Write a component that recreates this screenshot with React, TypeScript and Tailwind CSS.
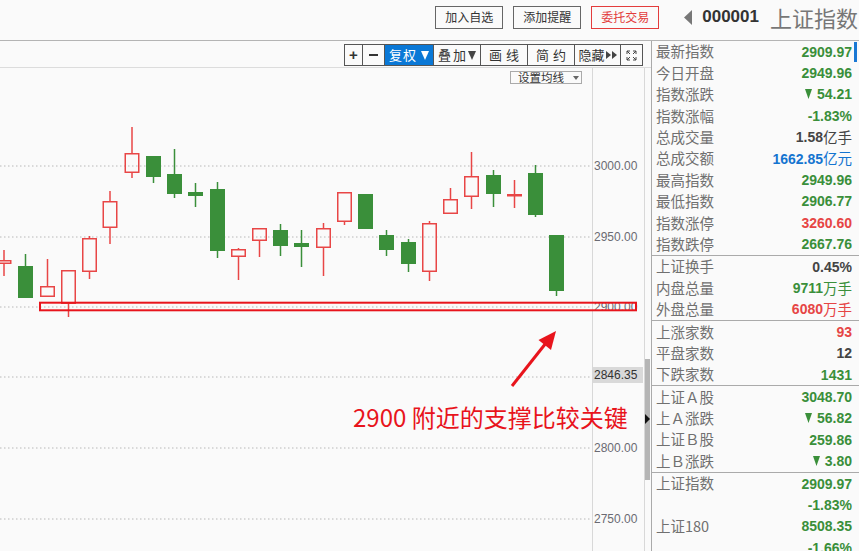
import React from 'react'

const RED = '#e84646'
const GREEN = '#3a8f3a'

// cx, bodyTop, bodyBottom, wickTop, wickBottom, colour (page coords)
type Candle = [number, number, number, number, number, 'r' | 'g' | 'x']

const candles: Candle[] = [
	[4, 260, 264, 250, 276, 'r'],
	[25.5, 266, 298, 254, 298, 'g'],
	[47.5, 286, 297, 259, 297, 'r'],
	[68.5, 270, 304, 270, 317, 'r'],
	[89.5, 238, 272, 236, 279, 'r'],
	[110, 201, 228, 191, 244, 'r'],
	[132, 153, 173, 127, 178, 'r'],
	[153.5, 156, 177, 156, 183, 'g'],
	[174.5, 174, 194, 149, 198, 'g'],
	[195.5, 192, 196, 183, 207, 'g'],
	[217.5, 189, 251, 182, 258, 'g'],
	[238.5, 249, 257, 248, 280, 'r'],
	[259.5, 228, 241, 228, 257, 'r'],
	[280.5, 230, 246, 224, 256, 'g'],
	[301.5, 243, 247, 230, 267, 'g'],
	[323.5, 228, 248, 223, 276, 'r'],
	[344.5, 192, 222, 192, 225, 'r'],
	[365.5, 194, 229, 194, 229, 'g'],
	[386.5, 235, 250, 230, 256, 'g'],
	[408.5, 242, 264, 239, 272, 'g'],
	[429.5, 223, 272, 221, 281, 'r'],
	[450.5, 199, 214, 188, 214, 'r'],
	[471.5, 176, 197, 152, 209, 'r'],
	[493.5, 175, 194, 170, 207, 'g'],
	[514.5, 194, 196.5, 180, 208, 'x'],
	[535.5, 173, 215, 165, 217, 'g'],
	[556.5, 235, 291, 235, 296, 'g'],
]

const grid = [166, 237, 307, 377, 448, 519]

const axis = [
	{ v: '3000.00', top: 'top-[91px]' },
	{ v: '2950.00', top: 'top-[162px]' },
	{ v: '2900.00', top: 'top-[232px]' },
	{ v: '2850.00', top: 'top-[302px]' },
	{ v: '2800.00', top: 'top-[373px]' },
	{ v: '2750.00', top: 'top-[444px]' },
]

const tone = {
	g: 'text-[#3a8f3a]',
	r: 'text-[#e64545]',
	d: 'text-[#444]',
	b: 'text-[#1474d0]',
}

type Row = {
	label: string
	value: string
	t: keyof typeof tone
	down?: boolean
	unit?: string
}

const groups: Row[][] = [
	[
		{ label: '最新指数', value: '2909.97', t: 'g' },
		{ label: '今日开盘', value: '2949.96', t: 'g' },
		{ label: '指数涨跌', value: '54.21', t: 'g', down: true },
		{ label: '指数涨幅', value: '-1.83%', t: 'g' },
		{ label: '总成交量', value: '1.58', t: 'd', unit: '亿手' },
		{ label: '总成交额', value: '1662.85', t: 'b', unit: '亿元' },
		{ label: '最高指数', value: '2949.96', t: 'g' },
		{ label: '最低指数', value: '2906.77', t: 'g' },
		{ label: '指数涨停', value: '3260.60', t: 'r' },
		{ label: '指数跌停', value: '2667.76', t: 'g' },
	],
	[
		{ label: '上证换手', value: '0.45%', t: 'd' },
		{ label: '内盘总量', value: '9711', t: 'g', unit: '万手' },
		{ label: '外盘总量', value: '6080', t: 'r', unit: '万手' },
	],
	[
		{ label: '上涨家数', value: '93', t: 'r' },
		{ label: '平盘家数', value: '12', t: 'd' },
		{ label: '下跌家数', value: '1431', t: 'g' },
	],
	[
		{ label: '上证Ａ股', value: '3048.70', t: 'g' },
		{ label: '上Ａ涨跌', value: '56.82', t: 'g', down: true },
		{ label: '上证Ｂ股', value: '259.86', t: 'g' },
		{ label: '上Ｂ涨跌', value: '3.80', t: 'g', down: true },
	],
	[
		{ label: '上证指数', value: '2909.97', t: 'g' },
		{ label: '', value: '-1.83%', t: 'g' },
		{ label: '上证180', value: '8508.35', t: 'g' },
		{ label: '', value: '-1.66%', t: 'g' },
	],
]

const Down = ({ fill }: { fill: string }) => (
	<svg width="7" height="10" viewBox="0 0 7 10" className="mr-[5px]">
		<polygon points="0,0 7,0 3.5,10" fill={fill} />
	</svg>
)

const TopBtn = ({ children, red }: { children: React.ReactNode; red?: boolean }) => (
	<div
		className={`h-[23px] w-[68px] flex items-center justify-center text-[12px] border ${
			red ? 'border-[#e33c3c] text-[#e33c3c]' : 'border-[#666] text-[#333]'
		}`}
	>
		{children}
	</div>
)

const Tool = ({
	w,
	children,
	active,
	last,
}: {
	w: string
	children: React.ReactNode
	active?: boolean
	last?: boolean
}) => (
	<div
		className={`${w} h-full flex items-center justify-center ${last ? '' : 'border-r border-[#555]'} ${
			active ? 'bg-[#0a78d6] text-white' : ''
		}`}
	>
		{children}
	</div>
)

function Candles() {
	return (
		<svg width="592" height="483" viewBox="0 68 592 483" className="block">
			{grid.map((y) => (
				<line key={y} x1="0" x2="592" y1={y} y2={y} stroke="#b8b8b8" strokeWidth="1" strokeDasharray="1.5 2.5" />
			))}
			{candles.map(([cx, bt, bb, wt, wb, c], i) => {
				if (c === 'g')
					return (
						<g key={i}>
							<line x1={cx} x2={cx} y1={wt} y2={wb} stroke={GREEN} strokeWidth="1.5" />
							<rect x={cx - 7.5} y={bt} width="15" height={bb - bt} fill={GREEN} />
						</g>
					)
				if (c === 'x')
					return (
						<g key={i}>
							<line x1={cx} x2={cx} y1={wt} y2={wb} stroke={RED} strokeWidth="1.5" />
							<rect x={cx - 7.5} y={bt} width="15" height={bb - bt} fill={RED} />
						</g>
					)
				return (
					<g key={i}>
						{wt < bt && <line x1={cx} x2={cx} y1={wt} y2={bt} stroke={RED} strokeWidth="1.5" />}
						{wb > bb && <line x1={cx} x2={cx} y1={bb} y2={wb} stroke={RED} strokeWidth="1.5" />}
						<rect x={cx - 6.75} y={bt + 0.75} width="13.5" height={bb - bt - 1.5} fill="none" stroke={RED} strokeWidth="1.5" />
					</g>
				)
			})}
		</svg>
	)
}

export default function App() {
	return (
		<div className="relative w-[859px] h-[551px] overflow-hidden bg-[#fafafa] flex flex-col font-['Noto_Sans_CJK_SC',sans-serif]">
			{/* header */}
			<header className="h-[41px] shrink-0 border-b border-[#b4b4b4]">
				<div className="h-[34px] flex items-center justify-end pr-[1px]">
					<div className="flex gap-[10px]">
						<TopBtn>加入自选</TopBtn>
						<TopBtn>添加提醒</TopBtn>
						<TopBtn red>委托交易</TopBtn>
					</div>
					<svg width="8" height="15" viewBox="0 0 8 15" className="ml-[25px]">
						<polygon points="8,0 8,15 0,7.5" fill="#777" />
					</svg>
					<span className="ml-[10px] text-[17px] font-bold text-[#333] font-['Liberation_Sans',sans-serif]">000001</span>
					<span className="ml-[11px] text-[22px] text-[#777] whitespace-nowrap">上证指数</span>
				</div>
			</header>

			<div className="flex flex-1 min-h-0">
				{/* chart column */}
				<div className="w-[651px] flex flex-col">
					<div className="h-[27px] shrink-0 border-b border-[#dcdcdc] flex justify-end pr-[8px] pt-[3px]">
						<div className="h-[22px] flex border border-[#555] text-[13px] text-[#333]">
							<Tool w="w-[18px]">
								<span className="font-bold text-[15px] font-['Liberation_Sans',sans-serif]">+</span>
							</Tool>
							<Tool w="w-[22px]">
								<span className="block w-[9px] h-[2px] bg-[#333]" />
							</Tool>
							<Tool w="w-[49px]" active>
								<span className="tracking-[1px]">复权</span>
								<svg width="8" height="9" viewBox="0 0 8 9" className="ml-[4px]">
									<polygon points="0,0 8,0 4,9" fill="#fff" />
								</svg>
							</Tool>
							<Tool w="w-[47px]">
								<span className="tracking-[2px]">叠加</span>
								<svg width="8" height="9" viewBox="0 0 8 9">
									<polygon points="0,0 8,0 4,9" fill="#444" />
								</svg>
							</Tool>
							<Tool w="w-[47px]">
								<span className="tracking-[4px] pl-[4px]">画线</span>
							</Tool>
							<Tool w="w-[47px]">
								<span className="tracking-[4px] pl-[4px]">简约</span>
							</Tool>
							<Tool w="w-[46px]">
								<span>隐藏</span>
								<svg width="11" height="8" viewBox="0 0 11 8" className="ml-[1px]">
									<polygon points="0,0 5,4 0,8" fill="#444" />
									<polygon points="6,0 11,4 6,8" fill="#444" />
								</svg>
							</Tool>
							<Tool w="w-[21px]" last>
								<svg width="11" height="11" viewBox="0 0 11 11" fill="none" stroke="#444" strokeWidth="1">
									<path d="M1 4V1h3M1 1l3 3" />
									<path d="M10 4V1H7M10 1L7 4" />
									<path d="M1 7v3h3M1 10l3-3" />
									<path d="M10 7v3H7M10 10L7 7" />
								</svg>
							</Tool>
						</div>
					</div>

					<div className="flex flex-1 min-h-0">
						<div className="w-[592px] relative">
							<Candles />
							<div className="absolute top-[3px] right-[10px] h-[13px] w-[72px] border border-[#aaa] flex items-center pl-[7px] text-[11.5px] leading-none text-[#333]">
								<span>设置均线</span>
								<svg width="6" height="4" viewBox="0 0 6 4" className="ml-[9px]">
									<polygon points="0,0 6,0 3,4" fill="#666" />
								</svg>
							</div>
						</div>

						<div className="w-[53px] relative border-l border-r border-[#d8d8d8] font-['Liberation_Sans',sans-serif] text-[12px] leading-[14px] text-[#6a6a72]">
							{axis.map((a) => (
								<span key={a.v} className={`absolute left-[1px] ${a.top}`}>
									{a.v}
								</span>
							))}
							<span className="absolute left-0 top-[299px] h-[16px] w-[50px] bg-[#d9d9d9] text-[#333] flex items-center pl-[1px]">
								2846.35
							</span>
						</div>

						<div className="w-[6px] relative">
							<div className="mt-[291px] h-[121px] w-[5px] bg-[#b5b5b5]" />
							<svg width="5" height="10" viewBox="0 0 5 10" className="absolute left-0 top-[346px]">
								<polygon points="0,0 5,5 0,10" fill="#111" />
							</svg>
						</div>
					</div>
				</div>

				{/* quote panel */}
				<aside className="w-[208px] relative border-l border-[#aaa]">
					<div className="absolute right-[2px] top-[1px] w-[3px] h-[20px] bg-[#1a78d4]" />
					{groups.map((g, gi) => (
						<div key={gi} className={gi < groups.length - 1 ? 'border-b border-[#aaa]' : ''}>
							{g.map((r, ri) => (
								<div key={ri} className="h-[21.4px] flex items-center justify-between pl-[4px] pr-[7px]">
									<span className="text-[14.5px] leading-none text-[#707070] whitespace-nowrap">{r.label}</span>
									<span className={`flex items-center text-[14px] leading-none font-bold font-['Liberation_Sans',sans-serif] ${tone[r.t]}`}>
										{r.down && <Down fill={GREEN} />}
										{r.value}
										{r.unit && (
											<span className="font-normal text-[14.5px] font-['Noto_Sans_CJK_SC',sans-serif]">{r.unit}</span>
										)}
									</span>
								</div>
							))}
						</div>
					))}
				</aside>
			</div>

			{/* annotation overlay */}
			<svg width="859" height="551" viewBox="0 0 859 551" className="absolute inset-0 pointer-events-none">
				<rect x="40" y="302.7" width="596" height="7.6" fill="none" stroke="#e8141c" strokeWidth="2" />
				<line x1="512" y1="386" x2="546" y2="343" stroke="#e8141c" strokeWidth="3" />
				<polygon points="556,331 538.5,340 551,350" fill="#e8141c" />
			</svg>
			<span className="absolute left-[353px] top-[403px] text-[24px] leading-[28px] text-[#e8141c] whitespace-nowrap">
				2900 附近的支撑比较关键
			</span>
		</div>
	)
}
